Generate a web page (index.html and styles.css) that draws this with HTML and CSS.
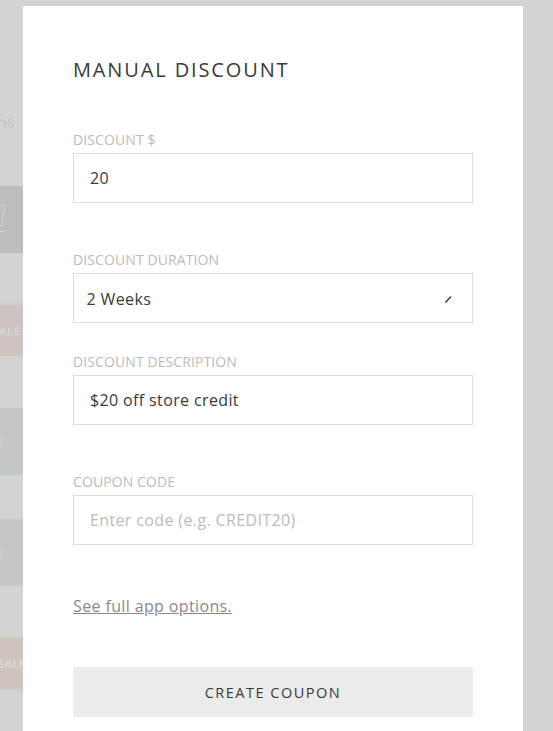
FILE: index.html
```html
<!DOCTYPE html>
<html lang="en">
<head>
    <meta charset="UTF-8">
    <meta name="viewport" content="width=device-width, initial-scale=1.0">
    <title>Manual Discount</title>
    <link rel="stylesheet" href="styles.css">
</head>
<body>

    <div class="page-edge">
        <div class="heading"><span>ns</span></div>
        <div class="tile cart">
            <svg width="23" height="67" viewBox="0 0 23 67" fill="none" stroke="#d2d2d2">
                <path d="M0 19.5H4.5L2 39.5H0M0 45.5H5"/>
            </svg>
        </div>
        <div class="sale pink"><span>SALE</span></div>
        <div class="tile green">
            <svg width="23" height="67" viewBox="0 0 23 67" fill="none" stroke="#cfd4d1">
                <path d="M-1 29C3 29 3 40-1 40M0 48.5H1"/>
            </svg>
        </div>
        <div class="tile green">
            <svg width="23" height="67" viewBox="0 0 23 67" fill="none" stroke="#cfd4d1">
                <path d="M-1 29C3 29 3 40-1 40M0 48.5H1"/>
            </svg>
        </div>
        <div class="sale orange"><span>SALE</span></div>
    </div>

    <form class="modal">
        <h1>Manual Discount</h1>

        <div class="field">
            <label for="amount">Discount $</label>
            <input type="text" id="amount" name="amount" value="20">
        </div>

        <div class="field short">
            <label for="duration">Discount Duration</label>
            <div class="select">
                <select id="duration" name="duration">
                    <option>2 Weeks</option>
                </select>
                <svg class="arrow" width="7" height="7" viewBox="0 0 7 7" stroke="#333" stroke-width="1.3">
                    <path d="M0.3 6.5L6 0.5"/>
                </svg>
            </div>
        </div>

        <div class="field">
            <label for="description">Discount Description</label>
            <input type="text" id="description" name="description" value="$20 off store credit">
        </div>

        <div class="field">
            <label for="code">Coupon Code</label>
            <input type="text" id="code" name="code" placeholder="Enter code (e.g. CREDIT20)">
        </div>

        <a class="more" href="#">See full app options.</a>

        <button type="button">Create Coupon</button>
    </form>

</body>
</html>
```
FILE: styles.css
```css
* {
    box-sizing: border-box;
}
body {
    margin: 0;
    height: 731px;
    display: flex;
    overflow: hidden;
    background-color: #d3d3d3;
    font-family: "Open Sans", sans-serif;
    color: #3a3a3a;
}

/* dimmed page behind the modal */
.page-edge {
    width: 23px;
    overflow: hidden;
    flex-shrink: 0;
}
.heading {
    height: 165px;
    margin-bottom: 21px;
    padding-top: 111px;
    border-bottom: 1px solid #d0d0d0;
    color: #c3c3c3;
    font-size: 16px;
    line-height: 22px;
}
.heading span {
    margin-left: -3px;
}
.tile {
    height: 67px;
}
.tile svg {
    display: block;
}
.cart {
    margin-bottom: 52px;
    background-color: #bdbdbd;
}
.green {
    margin-bottom: 44px;
    background-color: #c4c9c5;
}
.sale {
    height: 51px;
    display: flex;
    align-items: center;
    font-size: 11px;
    font-weight: bold;
    letter-spacing: 0.3px;
    color: #d8d6d4;
    box-shadow: 0 0 4px 2px #d2d0cb;
}
.pink {
    margin-bottom: 52px;
    background-color: #cdc3c0;
}
.pink span {
    margin-left: -7px;
}
.orange {
    margin-top: 52px;
    background-color: #cec4be;
}
.orange span {
    margin-left: -2px;
}

.modal {
    width: 500px;
    height: 725px;
    margin-top: 6px;
    padding: 50px 50px 14px;
    background: white;
    flex-shrink: 0;
}
h1 {
    margin: 0 0 47px;
    font-size: 20px;
    font-weight: normal;
    line-height: 27px;
    letter-spacing: 1.87px;
    text-transform: uppercase;
}
.field {
    height: 120px;
}
.short {
    height: 102px;
}
label {
    display: block;
    margin-bottom: 3px;
    color: #bbb;
    font-size: 14px;
    line-height: 20px;
    letter-spacing: 0.1px;
    text-transform: uppercase;
}
input,
select {
    display: block;
    width: 100%;
    height: 50px;
    padding: 0 16px;
    border: 1px solid #ddd;
    border-radius: 0;
    background: white;
    color: #3a3a3a;
    font-family: "Open Sans", sans-serif;
    font-size: 16px;
    letter-spacing: 0.37px;
}
input::placeholder {
    color: #bbb;
}
.select {
    position: relative;
}
select {
    appearance: none;
    padding: 2px 12px 0 12.5px;
}
.arrow {
    position: absolute;
    right: 21px;
    top: 23px;
}
.more {
    display: block;
    width: max-content;
    margin-top: 3px;
    color: #888;
    font-size: 16px;
    line-height: 22px;
    letter-spacing: 0.37px;
}
button {
    display: block;
    width: 100%;
    height: 50px;
    margin-top: 50px;
    border: none;
    background-color: #ebebeb;
    color: #3a3a3a;
    font-family: "Open Sans", sans-serif;
    font-size: 14.5px;
    letter-spacing: 1.5px;
    text-transform: uppercase;
}
```
